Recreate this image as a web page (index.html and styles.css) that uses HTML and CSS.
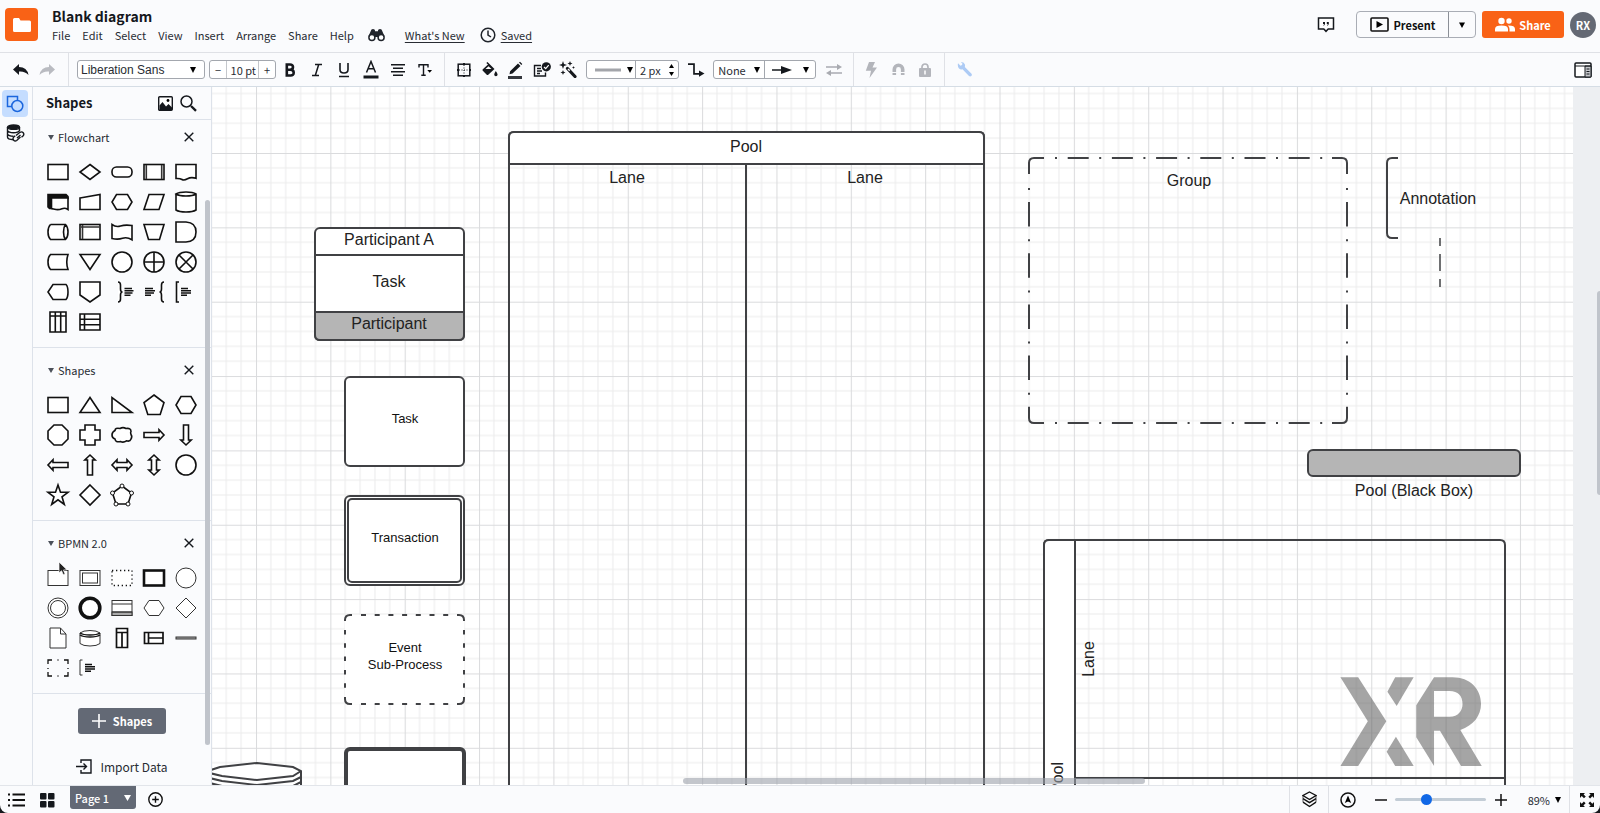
FILE: index.html
```html
<!DOCTYPE html>
<html lang="en">
<head>
<meta charset="utf-8">
<title>Blank diagram</title>
<link rel="stylesheet" href="styles.css">
</head>
<body>
<div class="app">
  <header class="header">
    <button class="logo" aria-label="Documents">
      <svg width="18" height="16" viewBox="0 0 18 16"><path d="M0 2.500Q0 1 1.500 1H6l1.500 2.500H16.500Q18 3.500 18 5v8.500Q18 15 16.500 15h-15Q0 15 0 13.500Z" fill="#fff"/></svg>
    </button>
    <div class="doc">
      <h1 class="doc-title">Blank diagram</h1>
      <nav class="menu">
        <button>File</button><button>Edit</button><button>Select</button><button>View</button><button>Insert</button><button>Arrange</button><button>Share</button><button>Help</button>
        <button class="find" aria-label="Find"><svg width="17" height="14" viewBox="0 0 17 14"><path d="M3 2.500Q3 1 5 1t2 1.500v.8h3v-.8Q10 1 12 1t2 1.500l2.600 6-3.600-1-3 1.500H7L4 7.500l-3.600 1Z" fill="#20242b"/><circle cx="3.900" cy="9.600" r="3" fill="#fff" stroke="#20242b" stroke-width="1.500"/><circle cx="13.100" cy="9.600" r="3" fill="#fff" stroke="#20242b" stroke-width="1.500"/></svg></button>
        <a href="#news" class="news">What's New</a>
        <a href="#history" class="saved"><svg width="16" height="16" viewBox="0 0 16 16" fill="none" stroke="#20242b" stroke-width="1.500"><circle cx="8" cy="8" r="6.800"/><path d="M8 3.500V8l3 2"/></svg><span>Saved</span></a>
      </nav>
    </div>
    <div class="actions">
      <button class="comment" aria-label="Comments"><svg width="18" height="16" viewBox="0 0 18 16"><path d="M1.500 1h15v11h-5.300L9 14.300 6.800 12H1.500Z" fill="#fff" stroke="#15181d" stroke-width="1.500"/><path d="M6 5h2v2L6.800 9 6.500 8.700 7 7H6ZM9.800 5h2v2l-1.200 2-.3-.3.5-1.700h-1Z" fill="#15181d"/></svg></button>
      <div class="present">
        <button class="present-main"><svg width="19" height="15" viewBox="0 0 19 15"><rect x="1" y="1" width="17" height="13" rx="1" fill="none" stroke="#111" stroke-width="1.600"/><path d="M6.500 4v7l6.500-3.500Z"/></svg>Present</button>
        <button class="present-more" aria-label="Present options"><svg width="6" height="6" viewBox="0 0 6 6"><path d="M0 .5h6L3 6Z"/></svg></button>
      </div>
      <button class="share"><svg width="20" height="15" viewBox="0 0 20 15" fill="#fff"><circle cx="6.500" cy="4" r="3.200"/><circle cx="14" cy="4" r="2.700"/><path d="M0 14.500V12Q0 8.600 6.500 8.600T13 12v2.500ZM14.500 14.500V12q0-2-1.700-3.400 7.200-.2 7.200 3.400v2.500Z"/></svg>Share</button>
      <button class="avatar">RX</button>
    </div>
  </header>

  <div class="toolbar">
    <div class="tools history">
      <button aria-label="Undo"><svg width="16" height="12" viewBox="0 0 16 12"><path d="M6 0v3q8 0 9.500 8Q12 7 6 7.500V11L0 5.500Z" fill="#15181d"/></svg></button>
      <button aria-label="Redo"><svg width="16" height="12" viewBox="0 0 16 12"><path d="M10 0v3Q2 3 .5 11 4 7 10 7.500V11l6-5.500Z" fill="#b9bbc1"/></svg></button>
    </div>
    <label class="font-box"><select class="font-select" aria-label="Font"><option>Liberation Sans</option></select><svg width="6" height="6" viewBox="0 0 6 6"><path d="M0 0h6L3 6Z"/></svg></label>
    <div class="size-box">
      <button aria-label="Smaller">−</button><input aria-label="Font size" value="10 pt"><button aria-label="Larger">+</button>
    </div>
    <div class="tools text-tools">
      <button aria-label="Bold"><svg width="12" height="14" viewBox="0 0 12 14" fill="none" stroke="#15181d" stroke-width="2.600"><path d="M2.800 1.500H6q3 0 3 2.600T6 6.800H2.800h3.700q3.200 0 3.200 2.900T6.500 12.500H2.800ZM2.800 1.500v11"/></svg></button>
      <button aria-label="Italic"><svg width="12" height="14" viewBox="0 0 12 14" fill="none" stroke="#15181d" stroke-width="1.500"><path d="M4 1.500h7M1 12.500h7M7.700 1.500l-3.400 11"/></svg></button>
      <button aria-label="Underline"><svg width="12" height="16" viewBox="0 0 12 16" fill="none" stroke="#15181d" stroke-width="1.600"><path d="M2 1v6.500Q2 11 6 11t4-3.500V1M1 14.500h10"/></svg></button>
      <button aria-label="Text colour"><svg width="16" height="19" viewBox="0 0 16 19"><path d="M3.500 12.500 8 1.500l4.500 11M5.200 8.800h5.600" fill="none" stroke="#15181d" stroke-width="1.500"/><path d="M.5 15.500h15V18.500H.5Z" fill="#15181d"/></svg></button>
      <button aria-label="Align"><svg width="14" height="14" viewBox="0 0 14 14" stroke="#15181d" stroke-width="1.500"><path d="M0 1.800h14M2 5.300h10M0 8.800h14M2 12.300h10"/></svg></button>
      <button aria-label="Text options"><svg width="14" height="14" viewBox="0 0 14 14"><path d="M1 4.500V1.800h9v2.700M5.500 1.800v10.400M3.300 12.300h4.400" fill="none" stroke="#15181d" stroke-width="1.400"/><path d="M9.300 7h4.700l-2.300 2.700Z"/></svg></button>
    </div>
    <div class="sep"></div>
    <div class="tools fill-tools">
      <button aria-label="Border"><svg width="14" height="14" viewBox="0 0 14 14" fill="none" stroke="#15181d" stroke-width="1.500"><rect x="1.200" y="1.200" width="11.600" height="11.600"/><path d="M7 2v10M2 7h10" stroke-width="1" stroke-dasharray="1 1.500"/><path d="M7 0v2M7 12v2M0 7h2M12 7h2" stroke-width="2"/></svg></button>
      <button aria-label="Fill"><svg width="16" height="15" viewBox="0 0 16 15"><path d="m5.500 0 7 7-6 5.500Q5.500 13.500 4.500 12.500L.8 8.800q-.8-.8 0-1.600L6 2.500 4.300 1Z" fill="#15181d"/><path d="M3.500 7h6L6.500 4.200Z" fill="#fff"/><path d="M13.800 9q1.800 2.500 1.800 3.600a1.700 1.700 0 0 1-3.400 0Q12.200 11.500 13.800 9Z" fill="#15181d"/></svg></button>
      <button aria-label="Line colour"><svg width="16" height="18" viewBox="0 0 16 18"><path d="M10 2.500 12.500 5 4.500 12.500l-3 .8.600-3ZM11 1.600l1-.9 2.300 2.200-1 1Z" fill="#15181d"/><path d="M0 15h14v3H0Z" fill="#34373d"/></svg></button>
      <button aria-label="Rules"><svg width="18" height="15" viewBox="0 0 18 15"><path d="M8 3.500H1.500V14h11v-3.500M4 6.500h4M4 9h5M4 11.500h3" fill="none" stroke="#15181d" stroke-width="1.400"/><circle cx="13.300" cy="4.800" r="4.600" fill="#15181d"/><path d="m11 5 1.700 1.700 3-3.500" fill="none" stroke="#fff" stroke-width="1.200"/></svg></button>
      <button aria-label="Style wand"><svg width="18" height="17" viewBox="0 0 18 17"><path d="m8.500 7.500 7.500 8" stroke="#15181d" stroke-width="3.200" stroke-linecap="round"/><path d="m9 8 1.700 1.800" stroke="#fff" stroke-width="1.300"/><path d="m4 0 1 3 3 1-3 1-1 3-1-3-3-1 3-1ZM11 0l.7 1.800 1.800.7-1.800.7L11 5l-.7-1.800-1.800-.7 1.800-.7ZM4 9l.7 1.800 1.800.7-1.800.7L4 14l-.7-1.800-1.800-.7 1.800-.7ZM14.500 5l.4 1.100 1.100.4-1.100.4-.4 1.100-.4-1.100-1.100-.4 1.100-.4Z" fill="#15181d"/></svg></button>
    </div>
    <div class="box line-box">
      <button class="line-style" aria-label="Line style"><svg width="26" height="4" viewBox="0 0 26 4"><path d="M0 2h26" stroke="#a3a5aa" stroke-width="3"/></svg><svg width="6" height="6" viewBox="0 0 6 6"><path d="M0 0h6L3 6Z"/></svg></button>
      <label class="width-field"><input aria-label="Line width" value="2 px"><svg width="5" height="12" viewBox="0 0 5 12"><path d="M0 4h5L2.500 0ZM0 8h5l-2.500 4Z"/></svg></label>
    </div>
    <button class="tool" aria-label="Connector"><svg width="17" height="14" viewBox="0 0 17 14"><path d="M0 1.200h6v9.600h6" fill="none" stroke="#15181d" stroke-width="1.700"/><path d="M11 7.500v6.300l5.500-3.200Z" fill="#15181d"/></svg></button>
    <div class="box ends-box">
      <button class="start-end">None<svg width="6" height="6" viewBox="0 0 6 6"><path d="M0 0h6L3 6Z"/></svg></button>
      <button class="finish-end" aria-label="Line end"><svg width="20" height="8" viewBox="0 0 20 8"><path d="M0 4h10" stroke="#15181d" stroke-width="1.500"/><path d="M9 0v8l11-4Z" fill="#15181d"/></svg><svg width="6" height="6" viewBox="0 0 6 6"><path d="M0 0h6L3 6Z"/></svg></button>
    </div>
    <button class="tool swap" aria-label="Swap"><svg width="16" height="12" viewBox="0 0 16 12" fill="#a9abb1"><path d="M0 2.300h11V0l5 3-5 3V3.700H0ZM16 8.300H5V6L0 9l5 3V9.700h11Z"/></svg></button>
    <div class="sep"></div>
    <div class="tools text-tools">
      <button aria-label="Actions"><svg width="12" height="16" viewBox="0 0 12 16"><path d="M4 0h6L7.500 5.500H12L4.500 16 6 8.800H.8Z" fill="#b3b5bb"/></svg></button>
      <button aria-label="Snap"><svg width="13" height="13" viewBox="0 0 13 13"><path d="M2.300 12V6.500a4.200 4.200 0 0 1 8.400 0V12" fill="none" stroke="#b3b5bb" stroke-width="3.600"/><path d="M0 9.500h13" stroke="#fafbfd" stroke-width="1"/></svg></button>
      <button aria-label="Lock"><svg width="12" height="14" viewBox="0 0 12 14"><path d="M3 6V4a3 3 0 0 1 6 0v2" fill="none" stroke="#b3b5bb" stroke-width="1.700"/><rect y="5" width="12" height="9" rx="1" fill="#b3b5bb"/><path d="M6 7.500v4" stroke="#fff" stroke-width="1.500"/></svg></button>
    </div>
    <div class="sep"></div>
    <button class="tool settings" aria-label="Settings"><svg width="15" height="15" viewBox="0 0 15 15"><path d="M1 1.200 3.500 3.700 5 3l.5-1.300L3.800 0q3.200 0 4 2.200.5 1.300 0 2.800l6.700 6.700q.8 1.300-.2 2.300-1.100.9-2.300 0L5.500 7.300Q3.500 7.800 2 6.500.3 4.500 1 1.200Z" fill="#adcbf5"/></svg></button>
    <button class="tool dock" aria-label="Side panel"><svg width="18" height="16" viewBox="0 0 18 16"><rect x="1" y="1" width="16" height="14" rx="1" fill="#fff" stroke="#15181d" stroke-width="1.500"/><path d="M11 4v11h6V4Z" fill="#c5c7cb" stroke="#15181d"/><path d="M1 4h16" stroke="#15181d"/><path d="M12.500 7h3M12.500 9.500h3M12.500 12h3" stroke="#15181d"/></svg></button>
  </div>

  <main class="body">
    <aside class="rail">
      <button class="rail-btn active" aria-label="Shapes"><svg width="18" height="18" viewBox="0 0 18 18" fill="none" stroke="#1b66dd" stroke-width="1.500"><path d="M6 11.500H1.500V1.500h10v4"/><circle cx="11.300" cy="11" r="5.500"/></svg></button>
      <button class="rail-btn" aria-label="Data"><svg width="19" height="19" viewBox="0 0 19 19" fill="none" stroke="#15181d" stroke-width="1.400"><ellipse cx="7.500" cy="3.200" rx="6" ry="2.200" fill="#15181d"/><path d="M1.500 3v10q0 2.500 6 2.700M13.500 3v4M1.500 6.500q1 2.200 6 2.200t6-2.200M1.500 10q1 2.200 6 2.200"/><path d="m10 11.500 4-3.200q2-1 3.200.5t0 3l-1.700 1.500M14.500 13l-3.800 3.500q-1.700 1-3-.3t-.2-2.900l1.700-1.500M11 14l3.500-3"/></svg></button>
    </aside>
    <section class="panel">
      <div class="panel-head">
        <h2>Shapes</h2>
        <button aria-label="Images"><svg width="15" height="15" viewBox="0 0 15 15"><rect x=".7" y=".7" width="13.600" height="13.600" rx="1" fill="#fff" stroke="#15181d" stroke-width="1.400"/><path d="M1.500 14V9.500l3-3.500 3.500 4.500 2.500-2.500 3.500 3.500V14Z" fill="#15181d"/><circle cx="10" cy="4.500" r="1.400"/></svg></button>
        <button aria-label="Search"><svg width="17" height="17" viewBox="0 0 17 17" fill="none" stroke="#15181d"><circle cx="6.500" cy="6.500" r="5.500" stroke-width="1.500"/><path d="m11 11 5 4.800" stroke-width="2.400"/></svg></button>
      </div>
      <div class="panel-scroll">
        <section class="group first">
          <div class="group-head"><svg width="6" height="5" viewBox="0 0 6 5"><path d="M0 0h6L3 5Z" fill="#4c515a"/></svg><h3>Flowchart</h3><button aria-label="Close Flowchart"><svg width="10" height="10" viewBox="0 0 10 10"><path d="m.7.7 8.600 8.600M9.300.7.700 9.300" stroke="#15181d" stroke-width="1.400"/></svg></button></div>
          <div class="grid">
            <button aria-label="Process"><svg viewBox="0 0 24 24"><rect x="2" y="4.500" width="20" height="15"/></svg></button>
            <button aria-label="Decision"><svg viewBox="0 0 24 24"><path d="m12 4.500 10 7.500-10 7.500L2 12Z"/></svg></button>
            <button aria-label="Terminator"><svg viewBox="0 0 24 24"><rect x="2" y="7" width="20" height="10" rx="4.500"/></svg></button>
            <button aria-label="Predefined process"><svg viewBox="0 0 24 24"><rect x="2" y="4.500" width="20" height="15"/><path d="M4.300 5v14M19.700 5v14" stroke="#333"/></svg></button>
            <button aria-label="Document"><svg viewBox="0 0 24 24"><path d="M2 4.500h20v13.800q-5-1.500-8.500.5T8 19.500t-6-1Z"/></svg></button>
            <button aria-label="Multiple documents"><svg viewBox="0 0 24 24"><path d="M2 4.500h18l2 2v2H6v10H3.500L2 17Z" fill="#111"/><path d="M5.500 8H22v11.500q-3-2-6-.8t-6 .8-4.500-1Z"/></svg></button>
            <button aria-label="Manual input"><svg viewBox="0 0 24 24"><path d="m2 8 20-3.500v15H2Z"/></svg></button>
            <button aria-label="Preparation"><svg viewBox="0 0 24 24"><path d="M6.500 4.500h11L22 12l-4.500 7.500h-11L2 12Z"/></svg></button>
            <button aria-label="Data shape"><svg viewBox="0 0 24 24"><path d="M7 4.500h15l-5 15H2Z"/></svg></button>
            <button aria-label="Database"><svg viewBox="0 0 24 24"><path d="M2 4v16q3 2 10 2t10-2V4q-3-2-10-2T2 4q3 2 10 2t10-2"/></svg></button>
            <button aria-label="Direct access storage"><svg viewBox="0 0 24 24"><path d="M4.500 4.500h15Q22 7 22 12t-2.500 7.500h-15Q2 17 2 12t2.500-7.500M19.500 4.500Q17.500 7 17.500 12t2 7.500"/></svg></button>
            <button aria-label="Internal storage"><svg viewBox="0 0 24 24"><rect x="2" y="4.500" width="20" height="15"/><path d="M4.500 5v14M3 7h18.500" stroke="#333"/></svg></button>
            <button aria-label="Paper tape"><svg viewBox="0 0 24 24"><path d="M2 4.500q4 3 8.500 1.500T22 5.500v14.300q-5-3-9.500-1.500T2 18.500Z"/></svg></button>
            <button aria-label="Manual operation"><svg viewBox="0 0 24 24"><path d="M2 4.500h20l-4.500 15h-11Z"/></svg></button>
            <button aria-label="Delay"><svg viewBox="0 0 24 24"><path d="M2 2h10q10 .5 10 10T12 22H2Z"/></svg></button>
            <button aria-label="Stored data"><svg viewBox="0 0 24 24"><path d="M4.500 4.500H22q-2.500 7.500 0 15H4.500Q2 17 2 12t2.500-7.500Z"/></svg></button>
            <button aria-label="Merge"><svg viewBox="0 0 24 24"><path d="M2 4.500h20l-10 15Z"/></svg></button>
            <button aria-label="Connector circle"><svg viewBox="0 0 24 24"><circle cx="12" cy="12" r="10"/></svg></button>
            <button aria-label="Or"><svg viewBox="0 0 24 24"><circle cx="12" cy="12" r="10"/><path d="M12 2v20M2 12h20"/></svg></button>
            <button aria-label="Summing junction"><svg viewBox="0 0 24 24"><circle cx="12" cy="12" r="10"/><path d="m5 5 14 14M19 5 5 19"/></svg></button>
            <button aria-label="Display"><svg viewBox="0 0 24 24"><path d="M7 4.500h13q2 2 2 7.500t-2 7.500H7L2 12Z"/></svg></button>
            <button aria-label="Off-page link"><svg viewBox="0 0 24 24"><path d="M2 2h20v13l-10 7-10-7Z"/></svg></button>
            <button aria-label="Brace note"><svg viewBox="0 0 24 24"><path d="M8 2q2.500 0 2.500 3v4q0 3 2 3-2 0-2 3v4q0 3-2.500 3M14.500 8.500H22M14.500 10.800h9M14.500 13h8M14.500 15.300h6"/></svg></button>
            <button aria-label="Brace note right"><svg viewBox="0 0 24 24"><path d="M22 2q-2.500 0-2.500 3v4q0 3-2 3 2 0 2 3v4q0 3 2.500 3M3 8.500h8M3 10.800h10M3 13h9M3 15.300h6"/></svg></button>
            <button aria-label="Note"><svg viewBox="0 0 24 24"><path d="M5 2H2.500v20H5M7 8.500h7M7 10.800h10M7 13h10M7 15.300h6"/></svg></button>
            <button aria-label="Vertical table"><svg viewBox="0 0 24 24"><path d="M4 2h16v20H4ZM4 6h16M9.300 2v20M14.700 2v20"/></svg></button>
            <button aria-label="Horizontal table"><svg viewBox="0 0 24 24"><path d="M2 4h20v16H2ZM6.500 4v16M2 9.300h20M2 14.700h20"/></svg></button>
          </div>
        </section>
        <section class="group">
          <div class="group-head"><svg width="6" height="5" viewBox="0 0 6 5"><path d="M0 0h6L3 5Z" fill="#4c515a"/></svg><h3>Shapes</h3><button aria-label="Close Shapes"><svg width="10" height="10" viewBox="0 0 10 10"><path d="m.7.7 8.600 8.600M9.300.7.700 9.300" stroke="#15181d" stroke-width="1.400"/></svg></button></div>
          <div class="grid">
            <button aria-label="Rectangle"><svg viewBox="0 0 24 24"><rect x="2" y="4.500" width="20" height="15"/></svg></button>
            <button aria-label="Triangle"><svg viewBox="0 0 24 24"><path d="m12 4.500 10 15H2Z"/></svg></button>
            <button aria-label="Right triangle"><svg viewBox="0 0 24 24"><path d="M2 4.500v15h20Z"/></svg></button>
            <button aria-label="Pentagon"><svg viewBox="0 0 24 24"><path d="m12 2 10 7.500L18.200 21.500H5.800L2 9.500Z"/></svg></button>
            <button aria-label="Hexagon"><svg viewBox="0 0 24 24"><path d="M7 3.500h10l5 8.500-5 8.500H7L2 12Z"/></svg></button>
            <button aria-label="Octagon"><svg viewBox="0 0 24 24"><path d="M8 2h8l6 6v8l-6 6H8l-6-6V8Z"/></svg></button>
            <button aria-label="Cross"><svg viewBox="0 0 24 24"><path d="M7 2h10v5h5v10h-5v5H7v-5H2V7h5Z"/></svg></button>
            <button aria-label="Cloud"><svg viewBox="0 0 24 24"><path d="M5 7.500q0-3 5-2 3-1.800 6 0 5-.8 5 3-.8 1 0 3 1.500 2 0 4.500-1 2.800-4.500 1.800-3 2.200-6 .7-5 1.200-5.500-2.500Q2 15 2 12t3-4.500Z"/></svg></button>
            <button aria-label="Right arrow"><svg viewBox="0 0 24 24"><path d="M2 9.500h15V6.800l5 5.200-5 5.200v-2.700H2Z"/></svg></button>
            <button aria-label="Down arrow"><svg viewBox="0 0 24 24"><path d="M9.500 2v15H6.800l5.200 5 5.200-5h-2.700V2Z"/></svg></button>
            <button aria-label="Left arrow"><svg viewBox="0 0 24 24"><path d="M22 9.500H7V6.800L2 12l5 5.200v-2.700h15Z"/></svg></button>
            <button aria-label="Up arrow"><svg viewBox="0 0 24 24"><path d="M9.500 22V7H6.800L12 2l5.200 5h-2.700v15Z"/></svg></button>
            <button aria-label="Double arrow"><svg viewBox="0 0 24 24"><path d="M7 9.500h10V6.800l5 5.200-5 5.200v-2.700H7v2.700L2 12l5-5.200Z"/></svg></button>
            <button aria-label="Vertical double arrow"><svg viewBox="0 0 24 24"><path d="M9.500 7v10H6.800l5.200 5 5.200-5h-2.700V7h2.700L12 2 6.800 7Z"/></svg></button>
            <button aria-label="Circle"><svg viewBox="0 0 24 24"><circle cx="12" cy="12" r="10"/></svg></button>
            <button aria-label="Star"><svg viewBox="0 0 24 24"><path d="m12 2 2.500 7.300H22l-6 4.500 2.300 7.700-6.300-4.700-6.300 4.700L8 13.800 2 9.300h7.500Z"/></svg></button>
            <button aria-label="Diamond"><svg viewBox="0 0 24 24"><path d="m12 2 10 10-10 10L2 12Z"/></svg></button>
            <button aria-label="Polygon"><svg viewBox="0 0 24 24"><path d="m12 3 9.500 7L18 21H6L2.500 10Z"/><g stroke-width="1"><circle cx="12" cy="3" r="2"/><circle cx="21.500" cy="10" r="2"/><circle cx="18" cy="21" r="2"/><circle cx="6" cy="21" r="2"/><circle cx="2.500" cy="10" r="2"/></g></svg></button>
          </div>
        </section>
        <section class="group thin">
          <div class="group-head"><svg width="6" height="5" viewBox="0 0 6 5"><path d="M0 0h6L3 5Z" fill="#4c515a"/></svg><h3>BPMN 2.0</h3><button aria-label="Close BPMN 2.0"><svg width="10" height="10" viewBox="0 0 10 10"><path d="m.7.7 8.600 8.600M9.300.7.700 9.300" stroke="#15181d" stroke-width="1.400"/></svg></button></div>
          <div class="grid">
            <button aria-label="Task"><svg viewBox="0 0 24 24"><rect x="2" y="4.500" width="20" height="15"/></svg></button>
            <button aria-label="Transaction"><svg viewBox="0 0 24 24"><rect x="2" y="4.500" width="20" height="15"/><rect x="4.500" y="7" width="15" height="10"/></svg></button>
            <button aria-label="Event sub-process"><svg viewBox="0 0 24 24"><path d="M2 4.500h20v15H2Z" stroke-width="1.300" stroke-dasharray="1.300 2.700"/></svg></button>
            <button aria-label="Call activity"><svg viewBox="0 0 24 24"><rect x="2" y="4.500" width="20" height="15" stroke-width="2.600"/></svg></button>
            <button aria-label="Start event"><svg viewBox="0 0 24 24"><circle cx="12" cy="12" r="10"/></svg></button>
            <button aria-label="Intermediate event"><svg viewBox="0 0 24 24"><circle cx="12" cy="12" r="10"/><circle cx="12" cy="12" r="7.500"/></svg></button>
            <button aria-label="End event"><svg viewBox="0 0 24 24"><circle cx="12" cy="12" r="9.800" stroke-width="3.600"/></svg></button>
            <button aria-label="Choreography"><svg viewBox="0 0 24 24"><rect x="2" y="4.500" width="20" height="15"/><rect x="2" y="16" width="20" height="3.500" fill="#aaa"/><path d="M2 8h20M2 16h20"/></svg></button>
            <button aria-label="Conversation"><svg viewBox="0 0 24 24"><path d="M7 4.500h10l5 7.500-5 7.500H7L2 12Z"/></svg></button>
            <button aria-label="Gateway"><svg viewBox="0 0 24 24"><path d="m12 2 10 10-10 10L2 12Z"/></svg></button>
            <button aria-label="Data object"><svg viewBox="0 0 24 24"><path d="M4 2h10.500l5.500 6v14H4ZM14.500 2v6H20"/></svg></button>
            <button aria-label="Data store"><svg viewBox="0 0 24 24"><path d="M2 7v10.500Q5 20 12 20t10-2.500V7q-3-2.500-10-2.500T2 7"/><path d="M2 7q3 2 10 2t10-2M2 9q3 2 10 2t10-2" stroke-width="1.300"/></svg></button>
            <button aria-label="Vertical pool"><svg viewBox="0 0 24 24"><path d="M6.500 2.500h11v19h-11ZM6.500 6.500h11M12 6.500v15" stroke-width="1.700"/></svg></button>
            <button aria-label="Horizontal pool"><svg viewBox="0 0 24 24"><path d="M2.500 6.500h18.500v11H2.500ZM6.500 6.500v11M6.500 12H21" stroke-width="1.700"/></svg></button>
            <button aria-label="Black box pool"><svg viewBox="0 0 24 24"><rect x="2" y="11" width="20" height="2" fill="#aaa"/></svg></button>
            <button aria-label="Group"><svg viewBox="0 0 24 24"><path d="M2 8V4h4M18 4h4v4M22 16v4h-4M6 20H2v-4M11.500 4h1M11.500 20h1M2 12v1M22 12v1" stroke-width="1.300"/></svg></button>
            <button aria-label="Annotation"><svg viewBox="0 0 24 24"><path d="M4.500 4H2v15h2.500"/><path d="M7 8.500h7M7 10.800h10M7 13h10M7 15.300h6" stroke-width="1.400"/></svg></button>
          </div>
        </section>
        <div class="add"><button class="add-shapes"><svg width="14" height="14" viewBox="0 0 14 14"><path d="M7 0v14M0 7h14" stroke="#fff" stroke-width="1.600"/></svg>Shapes</button></div>
        <svg class="cursor" width="10" height="15" viewBox="0 0 10 15"><path d="M1 1v11l2.500-2.300 1.800 4 1.800-.8-1.700-3.800 3.600-.3Z" fill="#222" stroke="#fff" stroke-width=".7"/></svg>
        <div class="panel-thumb"></div>
      </div>
      <button class="import"><svg width="16" height="15" viewBox="0 0 16 15" fill="none" stroke="#15181d" stroke-width="1.400"><path d="M5 4V1h10v13H5v-3M0 7.500h10.500M7.500 4.500l3 3-3 3"/></svg>Import Data</button>
    </section>
    <section class="canvas">
      <svg class="drawing" width="100%" height="100%">
        <defs>
          <pattern id="grid" width="100" height="100" patternUnits="userSpaceOnUse" patternTransform="translate(256 153) scale(.7435)">
            <path d="M20 0v100M40 0v100M60 0v100M80 0v100M0 20h100M0 40h100M0 60h100M0 80h100" stroke="#ebebec" stroke-width="1.400"/>
            <path d="M.7 0v100M0 .7h100" stroke="#dadbdd" stroke-width="1.400"/>
          </pattern>
        </defs>
        <g transform="translate(-212 -87)">
          <rect class="page" x="0" y="0" width="1573" height="1200"/>
          <rect x="0" y="0" width="1573" height="1200" fill="url(#grid)"/>
          <g class="shape">
            <rect class="paper" x="315" y="228" width="149" height="112" rx="5"/>
            <path class="muted" d="M315 312h149v23q0 5-5 5H320q-5 0-5-5Z"/>
            <path d="M315 255h149"/>
            <rect class="paper" x="345" y="377" width="119" height="89" rx="5"/>
            <rect class="paper" x="345" y="496" width="119" height="89" rx="5"/>
            <rect x="348" y="499" width="113" height="83" rx="4"/>
            <rect class="blank" x="345" y="615" width="119" height="89" rx="5"/>
            <path d="M345 621v-1q0-5 5-5h2M457 615h2q5 0 5 5v1M464 697v2q0 5-5 5h-2M352 704h-2q-5 0-5-5v-2"/>
            <path d="M361 615h88M361 704h88" stroke-dasharray="5 8.700"/>
            <path d="M345 630v60M464 630v60" stroke-dasharray="4.500 8.800"/>
            <rect class="paper" x="346" y="749" width="118" height="90" rx="4" stroke-width="4"/>
            <path class="paper" d="M205 772 220 767l37-4 36 4 8 4v30h-96Z"/>
            <path d="m205 772 17 4 35 4 36-4 8-5M205 777l17 4 35 4 36-4 8-4M205 782l17 4 35 4 36-4 8-4"/>
            <path d="M509 900V137q0-5 5-5h465q5 0 5 5v763M746 164v736"/>
            <path class="paper" d="M509 164v-27q0-5 5-5h465q5 0 5 5v27Z"/>
            <path d="M1029 174v-11q0-5 5-5h10M1332 158h10q5 0 5 5v11M1347 407v11q0 5-5 5h-10M1044 423h-10q-5 0-5-5v-11"/>
            <path d="M1055 158h277M1055 423h277" stroke-dasharray="2 10.700 21 10.500"/>
            <path d="M1029 188v219M1347 188v219" stroke-dasharray="2 12 24.500 12.700"/>
            <path d="M1398 158h-6q-5 0-5 5v70q0 5 5 5h6"/>
            <path d="M1440 238v49" stroke-width="1.500" stroke-dasharray="8 8 17 8"/>
            <rect class="muted" x="1308" y="450" width="212" height="26" rx="5"/>
            <path d="M1044 900V545q0-5 5-5h451q5 0 5 5v355"/>
            <path class="paper" d="M1075 900V540h-26q-5 0-5 5v355Z"/>
            <path d="M1075 778h430"/>
          </g>
          <g class="label">
            <text x="389" y="245">Participant A</text>
            <text x="389" y="287">Task</text>
            <text x="389" y="329">Participant</text>
            <text x="746" y="152">Pool</text>
            <text x="627" y="183">Lane</text>
            <text x="865" y="183">Lane</text>
            <text x="1189" y="186">Group</text>
            <text x="1438" y="204">Annotation</text>
            <text x="1414" y="496">Pool (Black Box)</text>
            <text transform="translate(1094 659) rotate(-90)">Lane</text>
            <text transform="translate(1063 778) rotate(-90)">Pool</text>
          </g>
          <g class="label small">
            <text x="405" y="423">Task</text>
            <text x="405" y="542">Transaction</text>
            <text x="405" y="652">Event</text>
            <text x="405" y="669">Sub-Process</text>
          </g>
          <path class="watermark" transform="translate(1020 420) scale(.37 .3333)" fill-rule="evenodd" d="M866 772h48l76 132-76 134h-48l74-134ZM1014 772h50l-46 86-25-43ZM1016 950l48 88h-50l-23-43ZM1119 772h50c48 0 77 36 77 80 0 35-20 64-56 78l58 108h-56l-57-106h-16v106l-48-86v-96ZM1119 813v77h42c24 0 35-18 35-38 0-24-12-39-35-39Z"/>
        </g>
      </svg>
      <div class="h-thumb"></div>
      <div class="v-thumb"></div>
    </section>
  </main>

  <footer class="footer">
    <button aria-label="Outline"><svg width="17" height="14" viewBox="0 0 17 14" stroke="#111" stroke-width="2"><path d="M4.500 1.500H17M4.500 7H17M4.500 12.500H17M0 1.500h2M0 7h2M0 12.500h2"/></svg></button>
    <button class="pages" aria-label="Page grid"><svg width="16" height="16" viewBox="0 0 16 16" fill="#15181d"><rect x="1" y="1" width="6.500" height="6.500" rx="1"/><rect x="9" y="1" width="6.500" height="6.500" rx="1"/><rect x="1" y="9" width="6.500" height="6.500" rx="1"/><rect x="9" y="9" width="6.500" height="6.500" rx="1"/></svg></button>
    <button class="tab">Page 1<svg width="7" height="6" viewBox="0 0 7 6"><path d="M0 0h7L3.500 6Z" fill="#fff"/></svg></button>
    <button class="new-page" aria-label="Add page"><svg width="15" height="15" viewBox="0 0 15 15" fill="none" stroke="#111" stroke-width="1.400"><circle cx="7.500" cy="7.500" r="6.700"/><path d="M7.500 4.200v6.600M4.200 7.500h6.600"/></svg></button>
    <div class="footer-right">
      <button class="cell layers" aria-label="Layers"><svg width="15" height="17" viewBox="0 0 15 17" fill="none" stroke="#111" stroke-width="1.400"><path d="m7.500 1 6.500 3.500L7.500 8.500 1 4.500ZM1 7.700l6.500 4 6.500-4M1 11.200l6.500 4.300 6.500-4.300"/><path d="M1 5v6M14 5v6" stroke-width=".7"/></svg></button>
      <div class="cell zoom">
        <button aria-label="Navigate"><svg width="16" height="16" viewBox="0 0 16 16"><circle cx="8" cy="8" r="7" fill="none" stroke="#111" stroke-width="1.500"/><path d="m8 3.500 3.200 7.500L8 9.500 4.800 11Z"/></svg></button>
        <button class="minus" aria-label="Zoom out"><svg width="12" height="12" viewBox="0 0 12 12"><path d="M0 6h12" stroke="#111" stroke-width="1.500"/></svg></button>
        <input class="slider" type="range" aria-label="Zoom" min="0" max="100" value="32">
        <button aria-label="Zoom in"><svg width="12" height="12" viewBox="0 0 12 12"><path d="M0 6h12M6 0v12" stroke="#111" stroke-width="1.500"/></svg></button>
        <button class="percent">89%<svg width="6" height="6" viewBox="0 0 6 6"><path d="M0 0h6L3 6Z"/></svg></button>
      </div>
      <button class="cell full" aria-label="Full screen"><svg width="16" height="16" viewBox="0 0 16 16" fill="#111"><path d="M1 1h5L4.600 2.400l2.200 2.200L5 6.300 2.700 4.100 1 6ZM15 1v5l-1.700-1.700-2.200 2.200-1.700-1.700 2.200-2.200L10 1ZM1 15v-5l1.700 1.700 2.200-2.200 1.700 1.700-2.200 2.200L6 15ZM15 15h-5l1.600-1.600-2.200-2.200 1.700-1.700 2.200 2.200L15 10Z"/></svg></button>
    </div>
  </footer>
</div>
</body>
</html>
```
FILE: styles.css
```css
* { box-sizing: border-box; }
body { margin: 0; background: #16181c; color: #282c33; font: 11px/16px "Noto Sans CJK SC", "Noto Sans", sans-serif; }
button, input, select { margin: 0; padding: 0; border: 0; background: none; color: inherit; font: inherit; }
button { display: inline-flex; align-items: center; justify-content: center; white-space: nowrap; }
h1, h2, h3 { margin: 0; }
svg { display: block; flex: none; }
.app { display: flex; flex-direction: column; height: 100vh; background: #fafbfd; border-radius: 0 0 8px 8px; overflow: hidden; }

.header { display: flex; align-items: center; height: 53px; padding: 0 4px 3px 5px; border-bottom: 1px solid #dfe1e6; flex: none; }
.logo { width: 33px; height: 33px; border-radius: 4px; background: #f96216; }
.doc { margin-left: 14px; }
.doc-title { font-size: 14px; line-height: 20px; font-weight: 700; color: #15181d; }
.menu { display: flex; align-items: center; gap: 12px; height: 18px; }
.menu a { color: inherit; text-underline-offset: 2px; }
.find { margin-left: 2px; }
.news { margin-left: 8px; }
.saved { display: flex; align-items: center; gap: 5px; margin-left: 3px; }
.actions { display: flex; align-items: center; margin-left: auto; font-weight: 700; }
.comment { margin-right: 21px; }
.present { display: flex; height: 27px; border: 1px solid #a9adb5; border-radius: 4px; margin-right: 6px; color: #111; }
.present-main { gap: 5px; width: 91px; }
.present-more { width: 27px; border-left: 1px solid #8b8f97; }
.share { width: 82px; height: 27px; gap: 4px; border-radius: 3px; background: #f96216; color: #fff; margin-right: 6px; }
.avatar { width: 26px; height: 26px; border-radius: 50%; background: #646974; color: #fff; }

.toolbar { display: flex; align-items: center; height: 34px; padding-right: 7px; border-bottom: 1px solid #d5dde5; flex: none; }
.tools { display: flex; }
.tools button, .tool { width: 20px; height: 24px; }
.tool { margin: 0 7px; flex: none; }
.history { gap: 6px; padding: 0 11px; height: 33px; align-items: center; border-right: 1px solid #dfe1e6; }
.text-tools { gap: 7px; }
.fill-tools { gap: 6px; }
.sep { width: 1px; height: 33px; margin: 0 9px; background: #dfe1e6; }
.font-box { display: flex; align-items: center; width: 128px; height: 19px; margin-left: 8px; padding: 0 8px 0 3px; border: 1px solid #a3a7ae; border-radius: 3px; background: #fff; }
.font-select { flex: 1; appearance: none; font: 12px/16px "Liberation Sans", sans-serif; }
.size-box { display: flex; width: 67px; height: 19px; margin: 0 4px; border: 1px solid #a3a7ae; border-radius: 3px; background: #fff; }
.size-box button { width: 16px; }
.size-box input { flex: 1; min-width: 0; padding-right: 2px; text-align: right; border: solid #c4c7cc; border-width: 0 1px; }
.box { display: flex; height: 19px; border: 1px solid #a3a7ae; border-radius: 3px; background: #fff; }
.line-box { width: 93px; margin-left: 8px; }
.line-style { width: 49px; flex: none; gap: 6px; padding-left: 6px; border-right: 1px solid #a3a7ae; }
.width-field { display: flex; flex: 1; min-width: 0; align-items: center; padding: 0 4px; }
.width-field input { flex: 1; min-width: 0; width: 24px; }
.ends-box { width: 103px; }
.start-end { width: 51px; gap: 8px; border-right: 1px solid #a3a7ae; }
.finish-end { flex: 1; gap: 11px; }
.tool.swap { margin: 0; margin-left: 8px; }
.swap + .sep { margin-right: 7px; }
.tool.settings { margin: 0; }
.tool.dock { margin: 0 0 0 auto; }

.body { display: flex; flex: 1; min-height: 0; }
.rail { display: flex; flex-direction: column; gap: 3px; width: 32px; padding: 3px 2px; }
.rail-btn { width: 26px; height: 27px; border-radius: 4px; }
.rail-btn.active { background: #c5ddff; }
.panel { display: flex; flex-direction: column; width: 180px; border: solid #dde2ea; border-width: 0 1px; }
.panel-head { display: flex; align-items: center; gap: 7px; height: 33px; padding: 0 14px 0 13px; border-bottom: 1px solid #dde2ea; flex: none; }
.panel-head h2 { flex: 1; font-size: 13px; line-height: 20px; color: #15181d; }
.panel-scroll { position: relative; flex: 1; min-height: 0; overflow: hidden; }
.group { padding: 12px 0 10px 9px; border-bottom: 1px solid #dde2ea; }
.group.first { padding-top: 7px; }
.group-head { display: flex; align-items: center; gap: 4px; padding: 0 17px 0 6px; height: 20px; }
.group-head h3 { flex: 1; font-size: 11px; font-weight: 400; line-height: 20px; }
.grid { display: grid; grid-template-columns: repeat(5, 32px); grid-auto-rows: 30px; margin-top: 10px; }
.grid svg { width: 24px; height: 24px; overflow: visible; fill: #fff; stroke: #111; stroke-width: 1.6; }
.thin .grid svg { stroke-width: 1; stroke: #333; }
.thin .grid svg [stroke-width] { stroke: #111; }
.add { padding: 14px 0; text-align: center; border-bottom: 1px solid #dde2ea; }
.add-shapes { width: 88px; height: 26px; gap: 7px; border-radius: 3px; background: #636975; color: #fff; font-weight: 700; vertical-align: top; }
.cursor { position: absolute; left: 25px; top: 441px; }
.panel-thumb { position: absolute; right: 1px; top: 80px; bottom: 3px; width: 5px; border-radius: 3px; background: #c0c4cb; }
.import { height: 37px; gap: 8px; font-size: 12px; flex: none; }

.canvas { position: relative; flex: 1; min-width: 0; overflow: hidden; background: #edeff2; }
.page { fill: #fff; }
.shape { fill: none; stroke: #404144; stroke-width: 2; }
.shape .paper { fill: #fff; }
.shape .blank { fill: #fff; stroke: none; }
.shape .muted { fill: #b5b5b5; }
.label { font: 16px "Liberation Sans", sans-serif; text-anchor: middle; fill: #222; }
.label.small { font-size: 13px; fill: #111; }
.watermark { fill: #555; fill-opacity: .53; }
.h-thumb { position: absolute; left: 471px; bottom: 1px; width: 462px; height: 6px; border-radius: 3px; background: #9ba0aa99; }
.v-thumb { position: absolute; right: 0; top: 204px; width: 3px; height: 204px; border-radius: 3px 0 0 3px; background: #c0c4cb; }

.footer { display: flex; align-items: center; height: 28px; padding-left: 8px; border-top: 1px solid #e2e5ea; flex: none; }
.pages { margin-left: 14px; }
.tab { align-self: flex-start; width: 66px; height: 23px; margin: 0 12px 0 15px; gap: 15px; border-radius: 0 0 3px 3px; background: #636975; color: #fff; font-weight: 500; }
.footer-right { display: flex; align-self: stretch; margin-left: auto; }
.cell { display: flex; align-items: center; border-left: 1px solid #dfe1e6; }
.layers { width: 39px; }
.zoom { width: 241px; padding: 0 8px 0 11px; }
.minus { margin: 0 8px 0 19px; }
.slider { appearance: none; width: 91px; height: 14px; margin-right: 9px; }
.slider::-webkit-slider-runnable-track { height: 3px; border-radius: 2px; background: #c3cdd6; }
.slider::-webkit-slider-thumb { appearance: none; width: 11px; height: 11px; margin-top: -4px; border-radius: 50%; background: #1168e6; }
.percent { gap: 5px; margin-left: auto; }
.full { width: 31px; padding-left: 4px; }
```
